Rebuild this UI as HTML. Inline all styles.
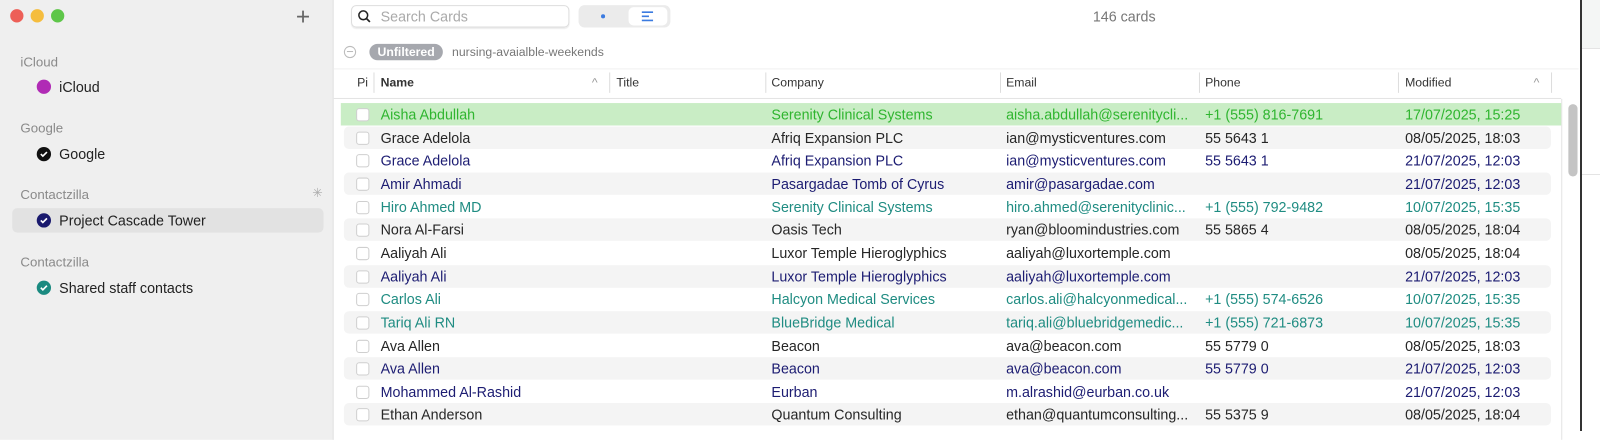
<!DOCTYPE html>
<html><head><meta charset="utf-8"><style>
*{margin:0;padding:0;box-sizing:border-box}
body{width:1600px;height:431px;overflow:hidden;background:#fff;font-family:"Liberation Sans",Helvetica,Arial,sans-serif;position:relative;color:#262626}
#w{position:absolute;left:0;top:0;width:1600px;height:431px;transform:scale(1.0204);transform-origin:0 0}
.sb{position:absolute;left:0;top:0;width:327px;height:431px;background:#efefef;border-right:1px solid #e2e2e2}
.dot{position:absolute;top:9px;width:13px;height:13px;border-radius:50%}
.sec{position:absolute;left:20px;font-size:13px;color:#8a8a8a}
.item{position:absolute;left:36px;font-size:14px;color:#222;display:flex;align-items:center}
.ic{width:14px;height:14px;border-radius:50%;margin-right:8px;display:inline-flex;align-items:center;justify-content:center}
.abs{position:absolute}
.row{position:absolute;left:334px;width:1196px;height:22px;font-size:14px}
.row.s{background:#f4f4f4;border-radius:5px;left:337px;width:1183px}
.row span{position:absolute;top:3px;white-space:nowrap;overflow:hidden}
.cb{position:absolute;left:15px;top:5px;width:13px;height:13px;border:1px solid #cfcfcf;border-radius:3px;background:#fff}
.hd{position:absolute;top:74px;font-size:12px;color:#333}
.sep{position:absolute;top:71px;width:1px;height:20px;background:#ddd}
</style></head><body>
<div id="w">
<div class="sb">
<div class="dot" style="left:10px;background:#ed5f57"></div>
<div class="dot" style="left:30px;background:#f5bd3e"></div>
<div class="dot" style="left:50px;background:#5ec649"></div>
<div class="abs" style="left:290px;top:3px;font-size:24px;color:#666;font-weight:300">+</div>
<div class="sec" style="top:53px">iCloud</div>
<div class="item" style="top:77px"><span class="ic" style="background:#b02bb5"></span>iCloud</div>
<div class="sec" style="top:118px">Google</div>
<div class="item" style="top:143px"><span class="ic" style="background:#111"><svg width="8" height="8" viewBox="0 0 8 8"><path d="M1 4l2 2 4-4" stroke="#fff" stroke-width="1.6" fill="none"/></svg></span>Google</div>
<div class="sec" style="top:183px">Contactzilla</div>
<div class="abs" style="left:306px;top:182px;font-size:12px;color:#aaa">✳</div>
<div class="abs" style="left:12px;top:204px;width:305px;height:24px;background:#e2e2e2;border-radius:5px"></div>
<div class="item" style="top:208px"><span class="ic" style="background:#1a1a6e"><svg width="8" height="8" viewBox="0 0 8 8"><path d="M1 4l2 2 4-4" stroke="#fff" stroke-width="1.6" fill="none"/></svg></span>Project Cascade Tower</div>
<div class="sec" style="top:249px">Contactzilla</div>
<div class="item" style="top:274px"><span class="ic" style="background:#1a8a80"><svg width="8" height="8" viewBox="0 0 8 8"><path d="M1 4l2 2 4-4" stroke="#fff" stroke-width="1.6" fill="none"/></svg></span>Shared staff contacts</div>
</div>
<div class="abs" style="left:344px;top:5px;width:214px;height:22px;border:1px solid #ddd;border-radius:5px;box-shadow:0 1px 1px rgba(0,0,0,.08)"></div>
<svg class="abs" style="left:350px;top:9px" width="14" height="14" viewBox="0 0 14 14"><circle cx="6" cy="6" r="4.3" stroke="#222" stroke-width="1.5" fill="none"/><path d="M9 9l3.5 3.5" stroke="#222" stroke-width="1.7"/></svg>
<div class="abs" style="left:373px;top:8px;font-size:14px;color:#aaa">Search Cards</div>
<div class="abs" style="left:567px;top:5px;width:90px;height:22px;background:#ebebeb;border-radius:6px"></div>
<div class="abs" style="left:589px;top:14px;width:4px;height:4px;border-radius:50%;background:#3b7be0"></div>
<div class="abs" style="left:616px;top:7px;width:38px;height:18px;background:#fff;border-radius:5px"></div>
<svg class="abs" style="left:628px;top:10px" width="14" height="12" viewBox="0 0 14 12"><path d="M1 2h11M1 6h7M1 10h11" stroke="#3b7be0" stroke-width="1.6"/></svg>
<div class="abs" style="left:1071px;top:8px;font-size:14px;color:#777">146 cards</div>
<div class="abs" style="left:337px;top:45px;width:12px;height:12px;border:1px solid #bbb;border-radius:50%"></div>
<div class="abs" style="left:340px;top:50px;width:6px;height:1px;background:#bbb"></div>
<div class="abs" style="left:362px;top:43px;width:72px;height:16px;background:#a6a8ae;border-radius:8px;color:#fff;font-size:12px;font-weight:bold;text-align:center;line-height:16px">Unfiltered</div>
<div class="abs" style="left:443px;top:44px;font-size:12px;color:#777">nursing-avaialble-weekends</div>
<div class="abs" style="left:327px;top:67px;width:1220px;height:1px;background:#f0f0f0"></div>
<div class="hd" style="left:350px">Pi</div><div class="sep" style="left:366px"></div>
<div class="hd" style="left:373px;font-weight:bold">Name</div>
<div class="hd" style="left:580px;color:#999">^</div><div class="sep" style="left:597px"></div>
<div class="hd" style="left:604px">Title</div><div class="sep" style="left:750px"></div>
<div class="hd" style="left:756px">Company</div><div class="sep" style="left:980px"></div>
<div class="hd" style="left:986px">Email</div><div class="sep" style="left:1175px"></div>
<div class="hd" style="left:1181px">Phone</div><div class="sep" style="left:1370px"></div>
<div class="hd" style="left:1377px">Modified</div>
<div class="hd" style="left:1503px;color:#999">^</div><div class="sep" style="left:1520px"></div>
<div class="abs" style="left:327px;top:96px;width:1203px;height:1px;background:#e4e4e4"></div>
<div class="abs" style="left:1530px;top:97px;width:1px;height:334px;background:#e4e4e4"></div>
<div class="abs" style="left:1537px;top:102px;width:9px;height:71px;background:#c4c4c4;border-radius:5px"></div>
<div id="rows"></div>
</div>
<div class="abs" style="left:1580px;top:0;width:2px;height:431px;background:#333"></div>
<div class="abs" style="left:1582px;top:0;width:18px;height:48px;background:#f4f6f5"></div>
<div class="abs" style="left:1582px;top:48px;width:18px;height:1px;background:#e4e4e4"></div>
<div class="abs" style="left:1582px;top:174px;width:18px;height:1px;background:#e4e4e4"></div>
<script>
var d=[
["g","Aisha Abdullah","Serenity Clinical Systems","aisha.abdullah@serenitycli...","+1 (555) 816-7691","17/07/2025, 15:25"],
["k","Grace Adelola","Afriq Expansion PLC","ian@mysticventures.com","55 5643 1","08/05/2025, 18:03"],
["n","Grace Adelola","Afriq Expansion PLC","ian@mysticventures.com","55 5643 1","21/07/2025, 12:03"],
["n","Amir Ahmadi","Pasargadae Tomb of Cyrus","amir@pasargadae.com","","21/07/2025, 12:03"],
["t","Hiro Ahmed MD","Serenity Clinical Systems","hiro.ahmed@serenityclinic...","+1 (555) 792-9482","10/07/2025, 15:35"],
["k","Nora Al-Farsi","Oasis Tech","ryan@bloomindustries.com","55 5865 4","08/05/2025, 18:04"],
["k","Aaliyah Ali","Luxor Temple Hieroglyphics","aaliyah@luxortemple.com","","08/05/2025, 18:04"],
["n","Aaliyah Ali","Luxor Temple Hieroglyphics","aaliyah@luxortemple.com","","21/07/2025, 12:03"],
["t","Carlos Ali","Halcyon Medical Services","carlos.ali@halcyonmedical...","+1 (555) 574-6526","10/07/2025, 15:35"],
["t","Tariq Ali RN","BlueBridge Medical","tariq.ali@bluebridgemedic...","+1 (555) 721-6873","10/07/2025, 15:35"],
["k","Ava Allen","Beacon","ava@beacon.com","55 5779 0","08/05/2025, 18:03"],
["n","Ava Allen","Beacon","ava@beacon.com","55 5779 0","21/07/2025, 12:03"],
["n","Mohammed Al-Rashid","Eurban","m.alrashid@eurban.co.uk","","21/07/2025, 12:03"],
["k","Ethan Anderson","Quantum Consulting","ethan@quantumconsulting...","55 5375 9","08/05/2025, 18:04"]];
var c={g:"#2fb52f",k:"#262626",n:"#1c1c72",t:"#1f8c82"},h="";
d.forEach(function(r,i){var y=101+i*22.65;var cls=i==0?"row":(i%2?"row s":"row");var bg=i==0?"background:#c9edc5;":"";
var off=(i%2&&i)?3:0;
h+='<div class="'+cls+'" style="top:'+y+'px;'+bg+'color:'+c[r[0]]+'"><div class="cb" style="left:'+(15-off)+'px"></div>'+
'<span style="left:'+(39-off)+'px">'+r[1]+'</span><span style="left:'+(422-off)+'px">'+r[2]+'</span><span style="left:'+(652-off)+'px">'+r[3]+'</span><span style="left:'+(847-off)+'px">'+r[4]+'</span><span style="left:'+(1043-off)+'px">'+r[5]+'</span></div>';});
document.getElementById("rows").innerHTML=h;
</script>
</body></html>
